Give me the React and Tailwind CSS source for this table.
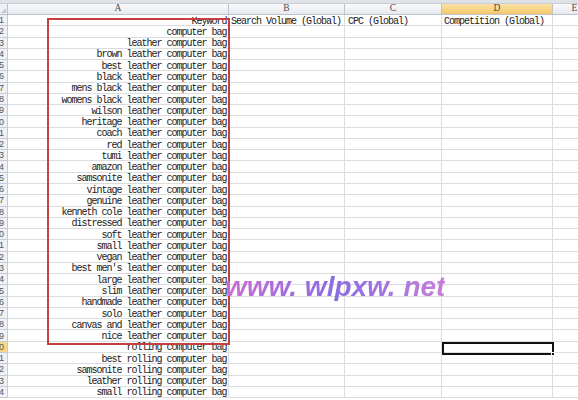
import React from 'react';

const rows = [
  ['Keyword', 'Search Volume (Global)', 'CPC (Global)', 'Competition (Global)'],
  ['computer bag'],
  ['leather computer bag'],
  ['brown leather computer bag'],
  ['best leather computer bag'],
  ['black leather computer bag'],
  ['mens black leather computer bag'],
  ['womens black leather computer bag'],
  ['wilson leather computer bag'],
  ['heritage leather computer bag'],
  ['coach leather computer bag'],
  ['red leather computer bag'],
  ['tumi leather computer bag'],
  ['amazon leather computer bag'],
  ['samsonite leather computer bag'],
  ['vintage leather computer bag'],
  ['genuine leather computer bag'],
  ['kenneth cole leather computer bag'],
  ['distressed leather computer bag'],
  ['soft leather computer bag'],
  ['small leather computer bag'],
  ['vegan leather computer bag'],
  ["best men's leather computer bag"],
  ['large leather computer bag'],
  ['slim leather computer bag'],
  ['handmade leather computer bag'],
  ['solo leather computer bag'],
  ['canvas and leather computer bag'],
  ['nice leather computer bag'],
  ['rolling computer bag'],
  ['best rolling computer bag'],
  ['samsonite rolling computer bag'],
  ['leather rolling computer bag'],
  ['small rolling computer bag'],
];

const cols = [
  { name: 'A', w: 'w-[221px]' },
  { name: 'B', w: 'w-[116px]' },
  { name: 'C', w: 'w-[97px]' },
  { name: 'D', w: 'w-[111px]', active: true },
  { name: 'E', w: 'w-[44px]' },
];

const mono = "font-['Liberation_Mono','DejaVu_Sans_Mono',monospace] text-[10px] tracking-[-1px] text-[#1a1a1a] pt-[2px]";

function Row({ n, cells }) {
  const active = n === 30;
  return (
    <div className="flex h-[11.28px] leading-[11px]">
      <div
        className={`w-[8px] shrink-0 flex justify-end items-center overflow-hidden pr-[3px] pt-[1px] border-r border-b border-[#c5cbd3] text-[9px] text-[#555] font-['Liberation_Sans',sans-serif] ${active ? 'bg-[#f8d98a]' : 'bg-[#eef1f5]'}`}
      >
        {n}
      </div>
      <div className={`w-[221px] shrink-0 flex items-center justify-end pr-[1.5px] border-r border-b border-[#dadcdd] whitespace-nowrap ${mono}`}>
        {cells[0]}
      </div>
      <div className={`w-[116px] shrink-0 flex items-center pl-[2px] border-r border-b border-[#dadcdd] whitespace-nowrap ${mono}`}>
        {cells[1]}
      </div>
      <div className={`w-[97px] shrink-0 flex items-center pl-[3px] border-r border-b border-[#dadcdd] whitespace-nowrap ${mono}`}>
        {cells[2]}
      </div>
      <div className={`w-[111px] shrink-0 flex items-center pl-[2px] border-r border-b border-[#dadcdd] whitespace-nowrap ${mono}`}>
        {cells[3]}
      </div>
      <div className="w-[60px] shrink-0 border-r border-b border-[#dadcdd]" />
    </div>
  );
}

export default function App() {
  return (
    <div className="relative w-[578px] h-[400px] overflow-hidden bg-white">
      <div className="h-[4px] bg-[#dfe3e8] border-b border-[#c9ced6]" />

      {/* column headers */}
      <div className="flex h-[11px]">
        <div className="w-[8px] shrink-0 relative bg-[#eef1f5] border-r border-b border-[#b8c0ca]">
          <div className="absolute right-[1px] bottom-[1px] w-0 h-0 border-l-[5px] border-l-transparent border-b-[5px] border-b-[#c3c9d1]" />
        </div>
        {cols.map((c) => (
          <div
            key={c.name}
            className={`${c.w} shrink-0 flex items-center justify-center border-r border-b border-[#bcc3cc] text-[9.5px] leading-none text-[#4a4a4a] font-['Liberation_Serif',serif] ${
              c.active ? 'bg-gradient-to-b from-[#fbe3a6] to-[#f4c767]' : 'bg-gradient-to-b from-[#f8f9fb] to-[#e7eaee]'
            }`}
          >
            {c.name}
          </div>
        ))}
      </div>

      {rows.map((cells, i) => (
        <Row key={i} n={i + 1} cells={cells} />
      ))}

      {/* red outline drawn over the keyword list */}
      <div className="absolute left-[47px] top-[18px] w-[183px] h-[327px] border-2 border-[#c43f3f] pointer-events-none" />

      {/* active cell D30 */}
      <div className="absolute left-[442px] top-[342px] w-[112px] h-[13px] border-2 border-[#111] pointer-events-none">
        <div className="absolute -right-[3px] -bottom-[3px] w-[4px] h-[4px] bg-[#111] border border-white" />
      </div>

      {/* watermark */}
      <div className="absolute left-[225px] top-[273px] text-[28px] leading-none font-bold italic font-['Liberation_Sans',Arial,sans-serif] whitespace-pre bg-gradient-to-r from-[#c96cd3] via-[#8a6ce2] to-[#c57ed9] bg-clip-text text-transparent">
        www. wlpxw. net
      </div>
    </div>
  );
}
